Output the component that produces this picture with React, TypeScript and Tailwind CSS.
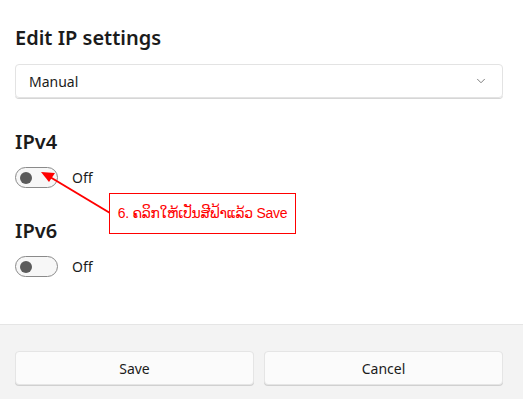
import { ChevronDown } from 'lucide-react'

const font = { fontFamily: '"Noto Sans", "Open Sans", sans-serif' }
const note = '6. ຄລິກໃຫ້ເປັນສີຟ້າແລ້ວ Save'

const Toggle = ({ label }: { label: string }) => (
  <div className='flex items-center gap-[14px] mt-[11px]'>
    <div className='w-[43px] h-[21px] rounded-full border border-[#8a8a8a] bg-[#f7f7f7] flex items-center pl-[4px]'>
      <div className='w-[12px] h-[12px] rounded-full bg-[#5b5b5b]' />
    </div>
    <span className='text-[14px] text-[#1b1b1b]'>{label}</span>
  </div>
)

export default function App() {
  return (
    <div className='relative w-[523px] h-[399px] bg-white flex flex-col overflow-hidden' style={font}>
      <div className='flex-1 pl-[15px] pr-[20px] pt-[24px]'>
        <h1 className='text-[20px] font-semibold text-[#1b1b1b] leading-[28px]'>Edit IP settings</h1>
        <div className='mt-[12px] h-[34px] rounded-[4px] border border-[#e3e3e3] shadow-[0_1px_0_#d6d6d6] flex items-center justify-between pl-[13px] pr-[14px]'>
          <span className='text-[14px] text-[#1b1b1b]'>Manual</span>
          <ChevronDown className='w-[14px] h-[14px] text-[#6b6b6b]' strokeWidth={1.5} />
        </div>

        <h2 className='mt-[30px] text-[20px] font-semibold text-[#1b1b1b] leading-[28px]'>IPv4</h2>
        <Toggle label='Off' />

        <h2 className='mt-[29px] text-[20px] font-semibold text-[#1b1b1b] leading-[28px]'>IPv6</h2>
        <Toggle label='Off' />
      </div>

      <div className='h-[75px] bg-[#f3f3f3] border-t border-[#e5e5e5] pl-[15px] pr-[20px] pt-[26px] grid grid-cols-2 gap-[10px]'>
        <button className='h-[34px] rounded-[4px] bg-[#fbfbfb] border border-[#e5e5e5] shadow-[0_1px_0_#d0d0d0] text-[14px] text-[#1b1b1b]'>Save</button>
        <button className='h-[34px] rounded-[4px] bg-[#fbfbfb] border border-[#e5e5e5] shadow-[0_1px_0_#d0d0d0] text-[14px] text-[#1b1b1b]'>Cancel</button>
      </div>

      <svg className='absolute left-0 top-0 pointer-events-none' width='523' height='399'>
        <line x1='110' y1='213' x2='50' y2='177' stroke='#ff0000' strokeWidth='2' />
        <polygon points='41,172 55,173 49,182' fill='#ff0000' />
      </svg>
      <div
        className='absolute left-[109px] top-[193px] w-[187px] h-[41px] bg-white shadow-[inset_0_0_0_1px_#ff0000] flex items-center justify-center whitespace-nowrap text-[14px] text-[#ff0000]'
        style={{ fontFamily: '"Liberation Sans", "DejaVu Sans", sans-serif' }}
      >
        <span className='tracking-[-0.3px]'>{note}</span>
      </div>
    </div>
  )
}
